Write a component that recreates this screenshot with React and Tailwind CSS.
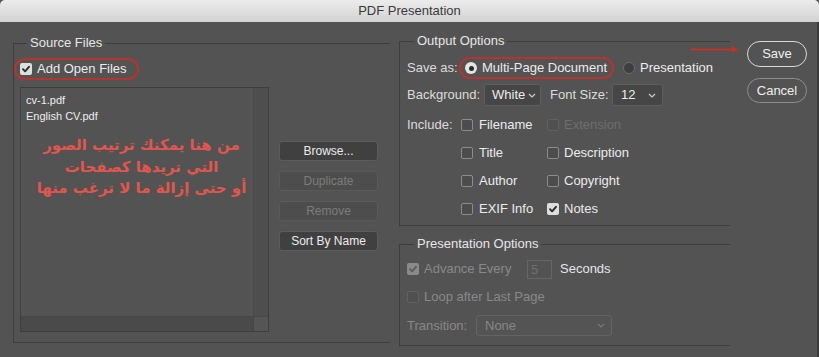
import React from "react";

function Check({ checked, disabled }) {
  if (checked) {
    return (
      <span
        className={
          disabled
            ? "w-[12px] h-[12px] shrink-0 rounded-[2px] bg-[#8a8a8a] flex items-center justify-center"
            : "w-[12px] h-[12px] shrink-0 rounded-[2px] bg-[#dedede] flex items-center justify-center"
        }
      >
        <svg width="10" height="10" viewBox="0 0 10 10">
          <path
            d="M2 5.2 L4.1 7.3 L8 2.8"
            fill="none"
            stroke={disabled ? "#5c5c5c" : "#2a2a2a"}
            strokeWidth="1.9"
            strokeLinecap="round"
            strokeLinejoin="round"
          />
        </svg>
      </span>
    );
  }
  return (
    <span
      className={
        disabled
          ? "w-[12px] h-[12px] shrink-0 rounded-[2px] border border-[#616161] bg-[#505050]"
          : "w-[12px] h-[12px] shrink-0 rounded-[2px] border border-[#8c8c8c] bg-[#4c4c4c]"
      }
    />
  );
}

function Chevron({ color = "#cfcfcf" }) {
  return (
    <svg width="8" height="5" viewBox="0 0 8 5" className="shrink-0">
      <path d="M1 1 L4 4 L7 1" fill="none" stroke={color} strokeWidth="1.1" />
    </svg>
  );
}

function Btn({ children, disabled }) {
  return (
    <div
      className={
        disabled
          ? "h-[20px] w-[99px] rounded-[3px] border border-[#5a5a5a] bg-[#4d4d4d] text-[#7c7c7c] text-[12px] leading-[18px] text-center"
          : "h-[20px] w-[99px] rounded-[3px] border border-[#5c5c5c] bg-[#404040] text-[#ececec] text-[12px] leading-[18px] text-center"
      }
    >
      {children}
    </div>
  );
}

export default function App() {
  return (
    <div
      className="w-[819px] h-[357px] bg-[#535353] overflow-hidden relative flex flex-col"
      style={{ fontFamily: '"Liberation Sans", Arial, sans-serif' }}
    >
      {/* title bar */}
      <div className="h-[22px] shrink-0 rounded-t-[5px] bg-linear-to-b from-[#ececec] to-[#d3d3d3] flex items-center justify-center text-[13px] text-[#3a3a3a]">
        PDF Presentation
      </div>

      <div className="flex-1 flex items-start border-r-2 border-[#383838]">
        {/* Source Files */}
        <fieldset className="ml-[13px] mt-[13px] w-[377px] h-[308px] border-l border-t border-b border-[#3d3d3d] flex flex-col">
          <legend className="ml-[13px] px-[3px] text-[13px] leading-[16px] text-[#e6e6e6]">
            Source Files
          </legend>
          <div className="mt-[7px] self-start h-[22px] rounded-full border-2 border-[#b8332f] pl-[4px] pr-[10px] flex items-center gap-[5px]">
            <Check checked />
            <span className="text-[13px] text-[#ececec]">Add Open Files</span>
          </div>
          <div className="flex mt-[7px]">
            <div className="ml-[6px] w-[249px] h-[245px] border border-[#3e3e3e] flex flex-col">
              <div className="flex-1 flex">
                <div className="flex-1 pt-[4px] pl-[5px] text-[11px] leading-[16px] text-[#eeeeee]">
                  <div>cv-1.pdf</div>
                  <div>English CV.pdf</div>
                  <div
                    dir="rtl"
                    className="mt-[11px] pl-[4px] text-center text-[15px] leading-[21.5px] text-[#e2564e] font-bold"
                    style={{ fontFamily: '"DejaVu Sans", sans-serif' }}
                  >
                    <div>من هنا يمكنك ترتيب الصور</div>
                    <div>التي تريدها كصفحات</div>
                    <div>أو حتى إزالة ما لا ترغب منها</div>
                  </div>
                </div>
                <div className="w-[15px] bg-[#4e4e4e] border-l border-[#484848]" />
              </div>
              <div className="h-[15px] flex">
                <div className="flex-1 bg-[#4a4a4a] border-t border-[#474747]" />
                <div className="w-[15px] bg-[#555555] border-l border-t border-[#474747]" />
              </div>
            </div>
            <div className="ml-[10px] mt-[54px] flex flex-col gap-[10px]">
              <Btn>Browse...</Btn>
              <Btn disabled>Duplicate</Btn>
              <Btn disabled>Remove</Btn>
              <Btn>Sort By Name</Btn>
            </div>
          </div>
        </fieldset>

        {/* Right column */}
        <div className="ml-[9px] mt-[11px] w-[331px] flex flex-col">
          <fieldset className="h-[193px] border-l border-t border-b border-[#3d3d3d] pl-[7px] flex flex-col">
            <legend className="ml-[7px] px-[3px] text-[13px] leading-[16px] text-[#e6e6e6]">
              Output Options
            </legend>
            {/* Save as */}
            <div className="mt-[8px] h-[22px] flex items-center text-[13px]">
              <span className="w-[52px] text-[#dcdcdc]">Save as:</span>
              <div className="h-[22px] rounded-full border-2 border-[#b8332f] pl-[4px] pr-[5px] flex items-center gap-[5px]">
                <span className="w-[12px] h-[12px] rounded-full bg-[#e4e4e4] flex items-center justify-center">
                  <span className="w-[5px] h-[5px] rounded-full bg-[#2b2b2b]" />
                </span>
                <span className="text-[#ececec]">Multi-Page Document</span>
              </div>
              <div className="ml-[9px] flex items-center gap-[5px]">
                <span className="w-[12px] h-[12px] rounded-full bg-[#3e3e3e] border border-[#6b6b6b]" />
                <span className="text-[#ececec]">Presentation</span>
              </div>
            </div>
            {/* Background / Font size */}
            <div className="mt-[5px] h-[22px] flex items-center text-[13px]">
              <span className="w-[77px] text-[#dcdcdc]">Background:</span>
              <div className="w-[57px] h-[22px] rounded-[3px] border border-[#5e5e5e] bg-[#464646] flex items-center gap-[3px] pl-[7px] pr-[4px]">
                <span className="text-[#ececec]">White</span>
                <Chevron />
              </div>
              <span className="ml-[9px] w-[62px] text-[#dcdcdc]">Font Size:</span>
              <div className="w-[51px] h-[22px] rounded-[3px] border border-[#5e5e5e] bg-[#464646] flex items-center justify-between pl-[8px] pr-[6px]">
                <span className="text-[#ececec]">12</span>
                <Chevron />
              </div>
            </div>
            {/* Include */}
            <div className="mt-[5px] grid grid-cols-[54px_86px_auto] auto-rows-[28px] items-center text-[13px] text-[#ececec]">
              <span className="text-[#dcdcdc]">Include:</span>
              <div className="flex items-center gap-[6px]">
                <Check />
                <span>Filename</span>
              </div>
              <div className="flex items-center gap-[5px]">
                <Check disabled />
                <span className="text-[#6e6e6e]">Extension</span>
              </div>
              <span />
              <div className="flex items-center gap-[6px]">
                <Check />
                <span>Title</span>
              </div>
              <div className="flex items-center gap-[5px]">
                <Check />
                <span>Description</span>
              </div>
              <span />
              <div className="flex items-center gap-[6px]">
                <Check />
                <span>Author</span>
              </div>
              <div className="flex items-center gap-[5px]">
                <Check />
                <span>Copyright</span>
              </div>
              <span />
              <div className="flex items-center gap-[6px]">
                <Check />
                <span>EXIF Info</span>
              </div>
              <div className="flex items-center gap-[5px]">
                <Check checked />
                <span>Notes</span>
              </div>
            </div>
          </fieldset>

          <fieldset className="mt-[10px] h-[110px] border-l border-t border-b border-[#3d3d3d] pl-[7px] flex flex-col text-[13px]">
            <legend className="ml-[7px] px-[3px] text-[13px] leading-[16px] text-[#e6e6e6]">
              Presentation Options
            </legend>
            <div className="mt-[7px] h-[20px] flex items-center">
              <Check checked disabled />
              <span className="ml-[5px] w-[103px] text-[#898989]">Advance Every</span>
              <div className="w-[25px] h-[19px] border border-[#666666] bg-[#535353] text-[#6f6f6f] pl-[3px] leading-[17px]">
                5
              </div>
              <span className="ml-[8px] text-[#e6e6e6]">Seconds</span>
            </div>
            <div className="mt-[8px] h-[20px] flex items-center">
              <Check disabled />
              <span className="ml-[5px] text-[#898989]">Loop after Last Page</span>
            </div>
            <div className="mt-[8px] h-[21px] flex items-center">
              <span className="w-[69px] text-[#898989]">Transition:</span>
              <div className="w-[136px] h-[21px] rounded-[3px] border border-[#636363] bg-[#545454] flex items-center justify-between pl-[8px] pr-[6px]">
                <span className="text-[#878787]">None</span>
                <Chevron color="#7a7a7a" />
              </div>
            </div>
          </fieldset>
        </div>

        {/* Save / Cancel */}
        <div className="ml-[17px] mt-[19px] flex flex-col gap-[11px]">
          <div className="w-[60px] h-[26px] rounded-full border-[1.5px] border-[#dadada] flex items-center justify-center text-[13px] text-[#f0f0f0]">
            Save
          </div>
          <div className="w-[60px] h-[25px] rounded-full border border-[#8e8e8e] flex items-center justify-center text-[13px] text-[#f0f0f0]">
            Cancel
          </div>
        </div>
      </div>

      {/* red annotation arrow */}
      <svg className="absolute left-[690px] top-[45px]" width="52" height="9" viewBox="0 0 52 9">
        <line x1="1" y1="4.5" x2="44" y2="4.5" stroke="#c4322c" strokeWidth="1.8" />
        <path d="M42 1.5 L49 4.5 L42 7.5 Z" fill="#c4322c" />
      </svg>
    </div>
  );
}
